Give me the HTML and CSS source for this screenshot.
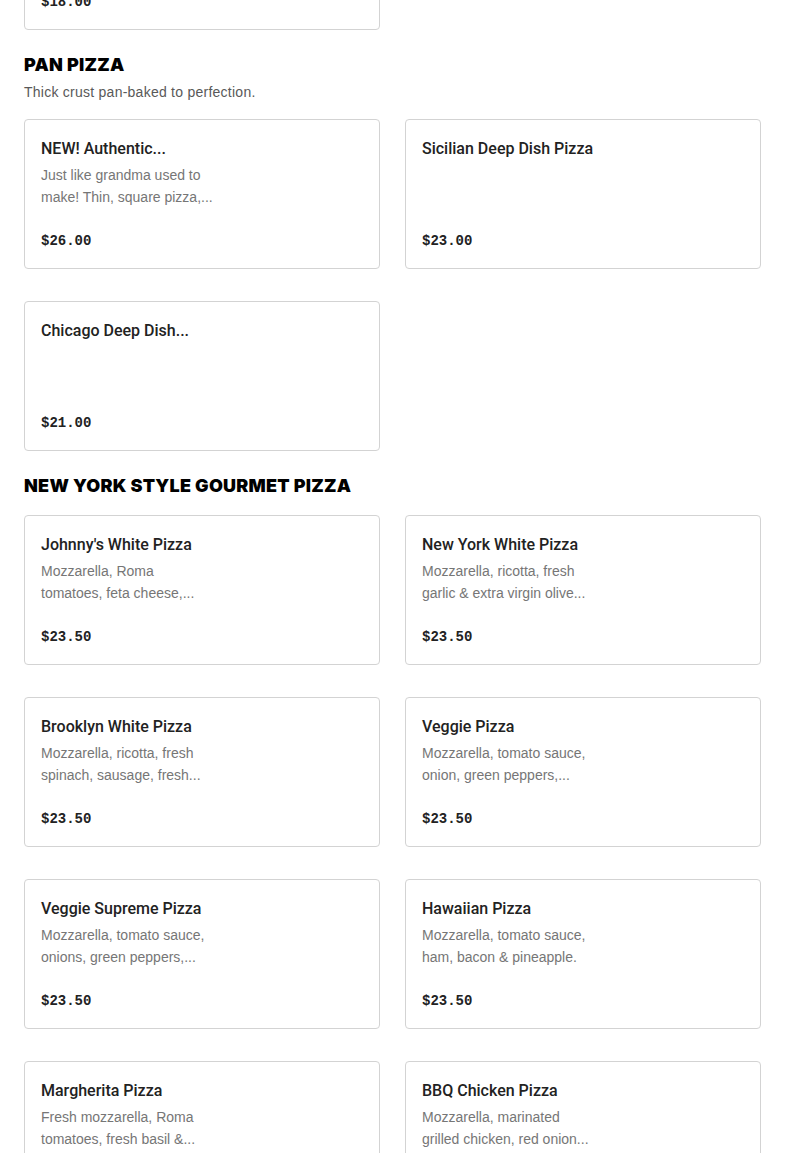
FILE: index.html
```html
<!DOCTYPE html>
<html lang="en">
<head>
    <meta charset="UTF-8">
    <meta name="viewport" content="width=device-width, initial-scale=1.0">
    <title>Menu</title>
    <link rel="stylesheet" href="styles.css">
</head>
<body>
    <div class="menu">
        <div class="grid first">
            <div class="card">
                <div class="price">$18.00</div>
            </div>
        </div>

        <section class="section">
            <h2 class="section-title">PAN PIZZA</h2>
            <p class="section-desc">Thick crust pan-baked to perfection.</p>
            <div class="grid">
                <div class="card">
                    <div class="name">NEW! Authentic...</div>
                    <div class="desc">Just like grandma used to<br>make! Thin, square pizza,...</div>
                    <div class="price">$26.00</div>
                </div>
                <div class="card">
                    <div class="name">Sicilian Deep Dish Pizza</div>
                    <div class="price">$23.00</div>
                </div>
                <div class="card">
                    <div class="name">Chicago Deep Dish...</div>
                    <div class="price">$21.00</div>
                </div>
            </div>
        </section>

        <section class="section">
            <h2 class="section-title">NEW YORK STYLE GOURMET PIZZA</h2>
            <div class="grid">
                <div class="card">
                    <div class="name">Johnny's White Pizza</div>
                    <div class="desc">Mozzarella, Roma<br>tomatoes, feta cheese,...</div>
                    <div class="price">$23.50</div>
                </div>
                <div class="card">
                    <div class="name">New York White Pizza</div>
                    <div class="desc">Mozzarella, ricotta, fresh<br>garlic &amp; extra virgin olive...</div>
                    <div class="price">$23.50</div>
                </div>
                <div class="card">
                    <div class="name">Brooklyn White Pizza</div>
                    <div class="desc">Mozzarella, ricotta, fresh<br>spinach, sausage, fresh...</div>
                    <div class="price">$23.50</div>
                </div>
                <div class="card">
                    <div class="name">Veggie Pizza</div>
                    <div class="desc">Mozzarella, tomato sauce,<br>onion, green peppers,...</div>
                    <div class="price">$23.50</div>
                </div>
                <div class="card">
                    <div class="name">Veggie Supreme Pizza</div>
                    <div class="desc">Mozzarella, tomato sauce,<br>onions, green peppers,...</div>
                    <div class="price">$23.50</div>
                </div>
                <div class="card">
                    <div class="name">Hawaiian Pizza</div>
                    <div class="desc">Mozzarella, tomato sauce,<br>ham, bacon &amp; pineapple.</div>
                    <div class="price">$23.50</div>
                </div>
                <div class="card">
                    <div class="name">Margherita Pizza</div>
                    <div class="desc">Fresh mozzarella, Roma<br>tomatoes, fresh basil &amp;...</div>
                    <div class="price">$23.50</div>
                </div>
                <div class="card">
                    <div class="name">BBQ Chicken Pizza</div>
                    <div class="desc">Mozzarella, marinated<br>grilled chicken, red onion...</div>
                    <div class="price">$23.50</div>
                </div>
            </div>
        </section>
    </div>
</body>
</html>
```

FILE: styles.css
```css
body {
    margin: 0;
    background-color: #fff;
    font-family: "Liberation Sans", Arial, sans-serif;
    color: #1f1f1f;
}
.menu {
    padding: 0 24px;
    margin-top: -120px; /* page is scrolled */
}
.grid {
    display: grid;
    grid-template-columns: 1fr 1fr;
    column-gap: 25px;
    row-gap: 32px;
    margin-top: 17px;
}
.grid.first {
    margin-top: 0;
}
.section {
    padding-top: 23px;
}
.section-title {
    margin: 0;
    font-family: Inter, "Liberation Sans", sans-serif;
    font-weight: 900;
    font-size: 18px;
    line-height: 24px;
    letter-spacing: 0.25px;
    color: #000;
}
.section-desc {
    margin: 5px 0 0;
    font-size: 14px;
    line-height: 20px;
    letter-spacing: 0.25px;
    color: #595959;
}
.card {
    height: 150px;
    box-sizing: border-box;
    border: 1px solid #d3d3d3;
    border-radius: 4px;
    padding: 17px 16px 17px;
    display: flex;
    flex-direction: column;
}
.name {
    font-family: Roboto, "Liberation Sans", sans-serif;
    font-size: 16px;
    line-height: 24px;
    font-weight: 500;
    color: #222;
}
.desc {
    margin-top: 3px;
    font-size: 14px;
    line-height: 22px;
    color: #767676;
}
.price {
    margin-top: auto;
    font-family: "Liberation Mono", "Courier New", monospace;
    font-weight: bold;
    font-size: 14px;
    line-height: 20px;
    color: #222;
}
```
